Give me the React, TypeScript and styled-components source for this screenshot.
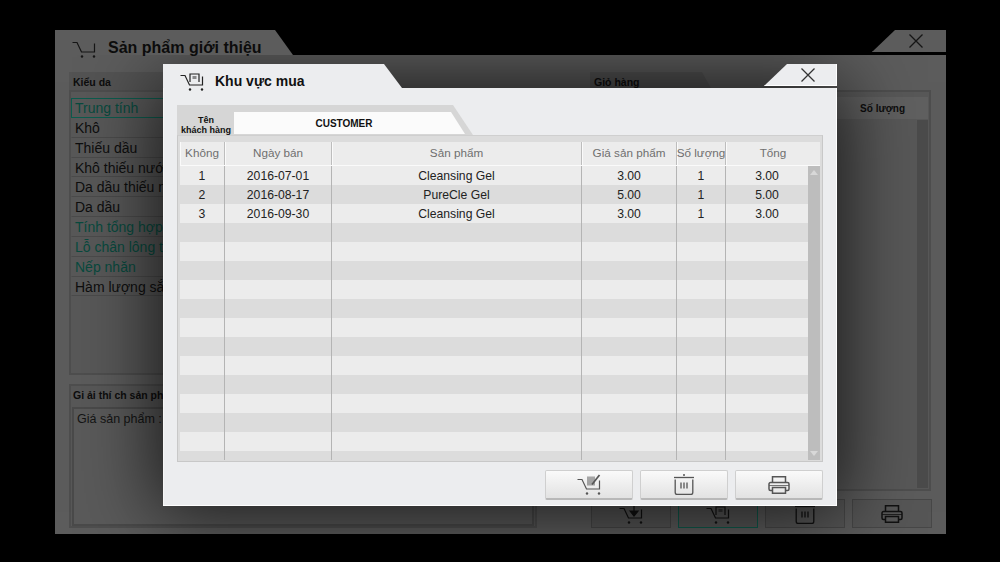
import React from 'react';
import styled, { createGlobalStyle } from 'styled-components';

const FONT = '"Liberation Sans", Arial, sans-serif';
const HEAD_COLUMNS = '44px 107px 250px 95px 49px 95px';
const BODY_COLUMNS = '44px 107px 250px 95px 49px 83px';

const GlobalStyle = createGlobalStyle`
  html, body { margin: 0; padding: 0; background: #000; }
  body { font-family: ${FONT}; }
`;

const Page = styled.div`
  position: relative;
  width: 1000px;
  height: 562px;
  padding: 30px 54px 28px 55px;
  box-sizing: border-box;
  background: #000;
  overflow: hidden;
`;

/* ---------- window behind the dialog ---------- */

const BackWindow = styled.div`
  height: 100%;
  display: flex;
  flex-direction: column;
`;

const TitleRow = styled.div<{ $height: number }>`
  position: relative;
  z-index: 1;
  height: ${p => p.$height}px;
  flex: none;
  display: flex;
  justify-content: space-between;
  align-items: flex-start;
`;

// the slanted shape sits on ::before so the icon can hang below the tab
const TitleTab = styled.div<{ $width: number; $gap: number; $top: number; $bg: string; $ink: string }>`
  position: relative;
  isolation: isolate;
  width: ${p => p.$width}px;
  height: 100%;
  padding: ${p => p.$top}px 0 0 17px;
  box-sizing: border-box;
  display: flex;
  align-items: center;
  gap: ${p => p.$gap}px;
  color: ${p => p.$ink};
  &::before {
    content: '';
    position: absolute;
    inset: 0;
    z-index: -1;
    background: ${p => p.$bg};
    clip-path: polygon(0 0, calc(100% - 18px) 0, 100% 100%, 0 100%);
  }
`;

const BackTitle = styled.span`
  font-size: 16px;
  font-weight: bold;
  color: #0c0c0c;
`;

const CloseTab = styled.div<{ $width: number; $bg: string; $ink: string; $edge: string }>`
  width: ${p => p.$width}px;
  height: 22px;
  box-sizing: border-box;
  padding-left: 14px;
  display: flex;
  align-items: center;
  justify-content: center;
  color: ${p => p.$ink};
  background: ${p => p.$bg};
  box-shadow: inset -1px -1px 0 ${p => p.$edge};
  clip-path: polygon(23px 0, 100% 0, 100% 100%, 0 100%);
`;

const BackBody = styled.div`
  flex: 1;
  min-height: 0;
  display: grid;
  grid-template-columns: 468px 342px;
  column-gap: 53px;
  padding: 17px 14px 6px 14px;
  background: #5c5c5c;
`;

const LeftColumn = styled.div`
  display: flex;
  flex-direction: column;
  gap: 9px;
  min-height: 0;
`;

const RightColumn = styled.div`
  display: flex;
  flex-direction: column;
  min-height: 0;
`;

const SmallTab = styled.div<{ $width: number }>`
  height: 18px;
  width: ${p => p.$width}px;
  box-sizing: border-box;
  padding: 3px 0 0 4px;
  font-size: 10.5px;
  font-weight: bold;
  line-height: 14px;
  color: #0d0d0d;
  background: #535353;
  clip-path: polygon(0 0, calc(100% - 10px) 0, 100% 100%, 0 100%);
`;

const ListPanel = styled.div`
  height: 285px;
  box-sizing: border-box;
  padding: 6px 2px 6px 0;
  background: #585858;
  border: 2px solid #4e4e4e;
`;

const SkinRow = styled.div<{ $teal?: boolean; $active?: boolean }>`
  height: 19.85px;
  box-sizing: border-box;
  padding-left: 3px;
  font-size: 14px;
  line-height: 19px;
  white-space: nowrap;
  overflow: hidden;
  color: ${p => (p.$teal ? '#084a3e' : '#0e0e0e')};
  border: 1px solid ${p => (p.$active ? '#0c5c4e' : 'transparent')};
  border-bottom-color: ${p => (p.$active ? '#0c5c4e' : '#4b4b4b')};
`;

const DescPanel = styled.div`
  flex: 1;
  min-height: 0;
  display: flex;
  flex-direction: column;
  border: 2px solid #4e4e4e;
  background: #585858;
`;

const DescHeading = styled.div`
  height: 21px;
  padding-left: 2px;
  font-size: 10.5px;
  font-weight: bold;
  line-height: 19px;
  color: #0d0d0d;
  white-space: nowrap;
`;

const DescBox = styled.div`
  flex: 1;
  margin: 0 1px 0;
  padding: 2px 3px;
  font-size: 12.5px;
  line-height: 16px;
  color: #141414;
  border: 2px solid #4a4a4a;
  background: #5a5a5a;
`;

const CartPanel = styled.div`
  height: 401px;
  box-sizing: border-box;
  margin-right: 1px;
  border: 2px solid #4e4e4e;
  background: #585858;
  display: flex;
  flex-direction: column;
`;

const CartHead = styled.div`
  height: 22px;
  margin: 5px 1px 0 0;
  flex: none;
  display: flex;
  justify-content: flex-end;
  align-items: center;
  padding-right: 23px;
  font-size: 10px;
  font-weight: bold;
  color: #0d0d0d;
  background: #606060;
`;

const CartBody = styled.div`
  flex: 1;
  display: flex;
  justify-content: flex-end;
  padding: 1px 1px 1px 0;
`;

const BackScroll = styled.div`
  width: 11px;
  background: #4b4b4b;
`;

const BackButtons = styled.div`
  display: flex;
  justify-content: flex-end;
  gap: 7px;
  margin-top: 8px;
`;

const BackButton = styled.div<{ $teal?: boolean }>`
  width: 80px;
  height: 29px;
  box-sizing: border-box;
  display: flex;
  align-items: center;
  justify-content: center;
  color: #111;
  background: #565656;
  border: 1px solid ${p => (p.$teal ? '#0f5a4c' : '#474747')};
`;

/* ---------- dialog ---------- */

const Dialog = styled.div`
  position: absolute;
  left: 163px;
  top: 64px;
  width: 674px;
  height: 442px;
  display: flex;
  flex-direction: column;
`;

const DialogTitle = styled.span`
  font-size: 14px;
  font-weight: bold;
  color: #111;
`;

const DialogBody = styled.div`
  flex: 1;
  min-height: 0;
  padding: 17px 14px 6px 14px;
  display: flex;
  flex-direction: column;
  background: #ecedef;
  box-shadow: inset -1px -1px 0 #fff, inset 1px 0 0 #f6f6f6, 0 0 70px 6px rgba(0, 0, 0, 0.75);
`;

const CustomerTab = styled.div`
  width: 296px;
  height: 30px;
  flex: none;
  box-sizing: border-box;
  padding: 7px 8px 1px 4px;
  display: flex;
  gap: 3px;
  background: #d6d6d6;
  clip-path: polygon(0 0, 276px 0, 100% 100%, 0 100%);
`;

const CustomerLabel = styled.div`
  width: 50px;
  flex: none;
  text-align: center;
  font-size: 9px;
  font-weight: bold;
  line-height: 10px;
  white-space: nowrap;
  color: #111;
  padding-top: 3px;
`;

const CustomerField = styled.div`
  flex: 1;
  height: 22px;
  box-sizing: border-box;
  display: flex;
  align-items: center;
  justify-content: center;
  padding: 1px 11px 0 0;
  font-size: 10px;
  font-weight: bold;
  color: #111;
  background: #fbfbfb;
  clip-path: polygon(0 0, calc(100% - 14px) 0, 100% 100%, 0 100%);
`;

const TableFrame = styled.div`
  height: 327px;
  flex: none;
  box-sizing: border-box;
  padding: 6px 2px 1px 2px;
  display: flex;
  flex-direction: column;
  background: #dcdcdc;
  border: 1px solid #c8c8c8;
  border-top-color: #cfcfcf;
  overflow: hidden;
`;

const HeadRow = styled.div`
  height: 23px;
  flex: none;
  display: grid;
  grid-template-columns: ${HEAD_COLUMNS};
  border-bottom: 1px solid #fafafa;
  background: #ececec;
`;

const HeadCell = styled.div`
  display: flex;
  align-items: center;
  justify-content: center;
  padding-bottom: 2px;
  font-size: 11.7px;
  white-space: nowrap;
  color: #6f6f6f;
  border-left: 1px solid #bdbdbd;
  box-shadow: inset 1px 0 0 #fafafa;
  &:first-child { border-left: none; }
`;

const BodyWrap = styled.div`
  flex: 1;
  min-height: 0;
  display: flex;
`;

const Rows = styled.div`
  flex: 1;
  min-width: 0;
  overflow: hidden;
`;

const Row = styled.div<{ $odd: boolean }>`
  height: 19px;
  display: grid;
  grid-template-columns: ${BODY_COLUMNS};
  background: ${p => (p.$odd ? '#dcdcdc' : '#ececec')};
`;

const Cell = styled.div`
  display: flex;
  align-items: center;
  justify-content: center;
  font-size: 12.2px;
  color: #222;
  border-left: 1px solid #b4b4b4;
  &:first-child { border-left: none; }
`;

const ScrollBar = styled.div`
  width: 12px;
  flex: none;
  display: flex;
  flex-direction: column;
  justify-content: space-between;
  align-items: center;
  padding: 4px 0;
  box-sizing: border-box;
  background: #bdbdbd;
`;

const ScrollArrow = styled.div<{ $down?: boolean }>`
  width: 0;
  height: 0;
  border-left: 4px solid transparent;
  border-right: 4px solid transparent;
  border-${p => (p.$down ? 'top' : 'bottom')}: 5px solid #d8d8d8;
`;

const ActionBar = styled.div`
  display: flex;
  justify-content: flex-end;
  gap: 7px;
  margin-top: 8px;
`;

const ActionButton = styled.button`
  width: 88px;
  height: 30px;
  padding: 0;
  display: flex;
  align-items: center;
  justify-content: center;
  color: #555;
  background: linear-gradient(#fafafa, #e2e2e2);
  border: 1px solid #cfcfcf;
  border-bottom: 2px solid #b8b8b8;
  border-radius: 2px;
`;

/* ---------- icons ---------- */

const CartIcon = ({ note }: { note?: 'box' | 'pen' | 'arrow' }) => (
  <svg width="24" height="22" viewBox="0 1 24 22" fill="none" stroke="currentColor" strokeWidth="1.2" style={{ flex: 'none' }}>
    <path d="M0.5 6.5H5L9.5 16H22.5V7.5" />
    <circle cx="10" cy="20.5" r="1.2" fill="currentColor" stroke="none" />
    <circle cx="22" cy="20.5" r="1.2" fill="currentColor" stroke="none" />
    {note === 'box' && (
      <>
        <path d="M10 13V5h9v8" />
        <path d="M12.5 7h4v3h-4z" fill="currentColor" opacity="0.5" stroke="none" />
      </>
    )}
    {note === 'arrow' && <path d="M15 4v6M11 9l4 5 4-5z" fill="currentColor" />}
    {note === 'pen' && (
      <>
        <path d="M10 3.5h8v9h-8z" fill="currentColor" stroke="none" opacity="0.5" />
        <path d="M15 11.5L22.5 2" strokeWidth="1.7" />
      </>
    )}
  </svg>
);

const TrashIcon = () => (
  <svg width="20" height="21" viewBox="0 0 20 21" fill="none" stroke="currentColor" strokeWidth="1.3">
    <path d="M0 3.5h20" />
    <path d="M9 1h2" strokeWidth="1.5" />
    <path d="M1.2 5.5v13a2 2 0 0 0 2 2h13.6a2 2 0 0 0 2-2v-13" />
    <path d="M7 8.5v6M10 8.5v6M13 8.5v6" />
  </svg>
);

const PrintIcon = () => (
  <svg width="22" height="18" viewBox="0 0 22 18" fill="none" stroke="currentColor" strokeWidth="1.5">
    <path d="M4.5 6.5V0.8h13v5.7" />
    <path d="M4 14.5H2.5A1.5 1.5 0 0 1 1 13V8a1.5 1.5 0 0 1 1.5-1.5h17A1.5 1.5 0 0 1 21 8v5a1.5 1.5 0 0 1-1.5 1.5H18" />
    <path d="M4.5 11.5h13v5.7h-13z" />
    <path d="M1 9.5h20" strokeWidth="0.8" />
  </svg>
);

const CloseIcon = () => (
  <svg width="14" height="14" viewBox="0 0 14 14" fill="none" stroke="currentColor" strokeWidth="1.3">
    <path d="M0.5 0.5l13 13M13.5 0.5l-13 13" />
  </svg>
);

/* ---------- data ---------- */

const SKIN_TYPES = [
  { label: 'Trung tính', teal: true, active: true },
  { label: 'Khô' },
  { label: 'Thiếu dầu' },
  { label: 'Khô thiếu nước' },
  { label: 'Da dầu thiếu nước' },
  { label: 'Da dầu' },
  { label: 'Tính tổng hợp', teal: true },
  { label: 'Lỗ chân lông to', teal: true },
  { label: 'Nếp nhăn', teal: true },
  { label: 'Hàm lượng sắc tố' },
];

const HEADERS = ['Không', 'Ngày bán', 'Sản phẩm', 'Giá sản phẩm', 'Số lượng', 'Tổng'];

const SALES = [
  ['1', '2016-07-01', 'Cleansing Gel', '3.00', '1', '3.00'],
  ['2', '2016-08-17', 'PureCle Gel', '5.00', '1', '5.00'],
  ['3', '2016-09-30', 'Cleansing Gel', '3.00', '1', '3.00'],
];

const ROWS = Array.from({ length: 16 }, (_, i) => SALES[i] ?? ['', '', '', '', '', '']);

export default function App() {
  return (
    <Page>
      <GlobalStyle />
      <BackWindow>
        <TitleRow $height={25}>
          <TitleTab $width={238} $gap={12} $top={10} $bg="#5c5c5c" $ink="#151515">
            <CartIcon />
            <BackTitle>Sản phẩm giới thiệu</BackTitle>
          </TitleTab>
          <CloseTab $width={74} $bg="#5c5c5c" $ink="#151515" $edge="#5c5c5c">
            <CloseIcon />
          </CloseTab>
        </TitleRow>
        <BackBody>
          <LeftColumn>
            <div>
              <SmallTab $width={104}>Kiểu da</SmallTab>
              <ListPanel>
                {SKIN_TYPES.map(s => (
                  <SkinRow key={s.label} $teal={s.teal} $active={s.active}>
                    {s.label}
                  </SkinRow>
                ))}
              </ListPanel>
            </div>
            <DescPanel>
              <DescHeading>Gi ải thí ch sản phẩm</DescHeading>
              <DescBox>Giá sản phẩm : 5.00</DescBox>
            </DescPanel>
          </LeftColumn>
          <RightColumn>
            <SmallTab $width={122}>Giỏ hàng</SmallTab>
            <CartPanel>
              <CartHead>Số lượng</CartHead>
              <CartBody>
                <BackScroll />
              </CartBody>
            </CartPanel>
            <BackButtons>
              <BackButton><CartIcon note="arrow" /></BackButton>
              <BackButton $teal><CartIcon note="box" /></BackButton>
              <BackButton><TrashIcon /></BackButton>
              <BackButton><PrintIcon /></BackButton>
            </BackButtons>
          </RightColumn>
        </BackBody>
      </BackWindow>

      <Dialog>
        <TitleRow $height={24}>
          <TitleTab $width={239} $gap={11} $top={10} $bg="#ecedef" $ink="#222">
            <CartIcon note="box" />
            <DialogTitle>Khu vực mua</DialogTitle>
          </TitleTab>
          <CloseTab $width={73} $bg="#ecedef" $ink="#333" $edge="#fff">
            <CloseIcon />
          </CloseTab>
        </TitleRow>
        <DialogBody>
          <CustomerTab>
            <CustomerLabel>Tên<br />khách hàng</CustomerLabel>
            <CustomerField>CUSTOMER</CustomerField>
          </CustomerTab>
          <TableFrame>
            <HeadRow>
              {HEADERS.map(h => <HeadCell key={h}>{h}</HeadCell>)}
            </HeadRow>
            <BodyWrap>
              <Rows>
                {ROWS.map((row, i) => (
                  <Row key={i} $odd={i % 2 === 1}>
                    {row.map((c, j) => <Cell key={j}>{c}</Cell>)}
                  </Row>
                ))}
              </Rows>
              <ScrollBar>
                <ScrollArrow />
                <ScrollArrow $down />
              </ScrollBar>
            </BodyWrap>
          </TableFrame>
          <ActionBar>
            <ActionButton><CartIcon note="pen" /></ActionButton>
            <ActionButton><TrashIcon /></ActionButton>
            <ActionButton><PrintIcon /></ActionButton>
          </ActionBar>
        </DialogBody>
      </Dialog>
    </Page>
  );
}
